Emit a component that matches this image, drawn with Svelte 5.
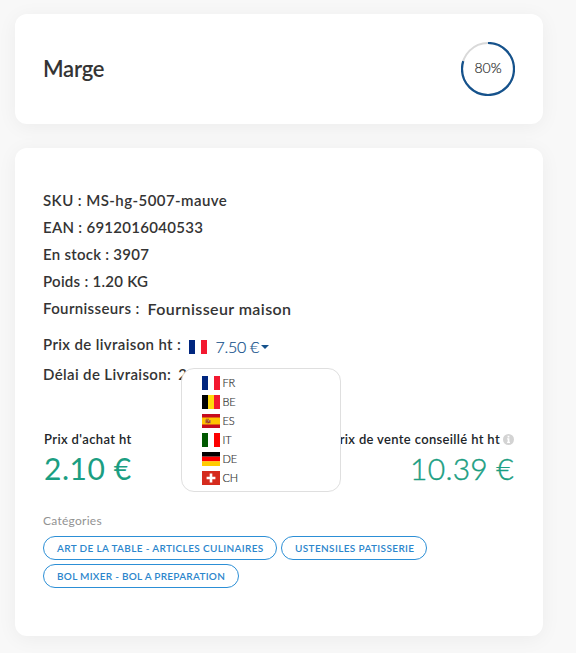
<script>
  const details = [
    { text: 'SKU : MS-hg-5007-mauve', track: 0.43 },
    { text: 'EAN : 6912016040533', track: 0.28 },
    { text: 'En stock : 3907', track: 0.26 },
    { text: 'Poids : 1.20 KG', track: 0.27 }
  ];
  const countries = ['FR', 'BE', 'ES', 'IT', 'DE', 'CH'];
  const categories = [
    { text: 'ART DE LA TABLE - ARTICLES CULINAIRES', width: 234, track: 0.36 },
    { text: 'USTENSILES PATISSERIE', width: 146, track: 0.37 },
    { text: 'BOL MIXER - BOL A PREPARATION', width: 196, track: 0.28 }
  ];
</script>

{#snippet flag(code)}
  <svg class="flag" width="18" height="14" viewBox="0 0 18 14" aria-hidden="true">
    {#if code === 'FR'}
      <path fill="#00267f" d="M0 0h6v14H0z" /><path fill="#fff" d="M6 0h6v14H6z" /><path fill="#f31830" d="M12 0h6v14h-6z" />
    {:else if code === 'BE'}
      <path fill="#000001" d="M0 0h6v14H0z" /><path fill="#ffd90c" d="M6 0h6v14H6z" /><path fill="#f31830" d="M12 0h6v14h-6z" />
    {:else if code === 'ES'}
      <path fill="#c60b1e" d="M0 0h18v14H0z" /><path fill="#ffc400" d="M0 3.5h18v7H0z" />
      <path fill="#c68a35" d="M3 5.4h1v3.8H3zM8 6h1v3.2H8z" />
      <path fill="#ad5a23" d="M4 4.8h3v1H4zM4 6.2h4V9L6 9.6 4 9z" />
      <path fill="#9b302c" d="M4.3 6.4h1.4v1.2H4.3zM6 7.6h1.5V9H6z" />
      <path fill="#9da0aa" d="M6 6.4h1v1H6z" />
    {:else if code === 'IT'}
      <path fill="#005700" d="M0 0h6v14H0z" /><path fill="#fff" d="M6 0h6v14H6z" /><path fill="#fc0000" d="M12 0h6v14h-6z" />
    {:else if code === 'DE'}
      <path fill="#000" d="M0 0h18v4.7H0z" /><path fill="#f00" d="M0 4.7h18v4.7H0z" /><path fill="#fc0" d="M0 9.3h18V14H0z" />
    {:else}
      <path fill="#d52b1e" d="M0 0h18v14H0z" /><path fill="#fff" d="M7.7 2.6h2.6v3.1h3.1v2.6h-3.1v3.1H7.7V8.3H4.6V5.7h3.1z" />
    {/if}
  </svg>
{/snippet}

<main>
  <section class="card margin">
    <h2>Marge</h2>
    <div class="gauge">
      <svg width="54" height="54" viewBox="0 0 54 54" aria-hidden="true">
        <circle cx="27" cy="27" r="26" fill="none" stroke="#d9d9d9" stroke-width="2" />
        <circle cx="27" cy="27" r="26" fill="none" stroke="#15528c" stroke-width="2.2" pathLength="100" stroke-dasharray="80 20" transform="rotate(-90 27 27)" />
      </svg>
      <span>80%</span>
    </div>
  </section>

  <section class="card product">
    {#each details as d}
      <div class="row" style="letter-spacing: {d.track}px">{d.text}</div>
    {/each}
    <div class="row supplier"><span>Fournisseurs :</span><b>Fournisseur maison</b></div>
    <div class="row delivery">
      <span>Prix de livraison ht :</span>
      <div class="picker">
        {@render flag('FR')}
        <span class="fee">7.50 €</span><i class="caret"></i>
        <ul class="menu">
          {#each countries as c}
            <li>{@render flag(c)}<span>{c}</span></li>
          {/each}
        </ul>
      </div>
    </div>
    <div class="row delay"><span>Délai de Livraison:</span><span>2</span></div>

    <div class="prices">
      <div>
        <div class="label">Prix d'achat ht</div>
        <div class="amount">2.10 €</div>
      </div>
      <div class="right">
        <div class="label sale">
          Prix de vente conseillé ht ht
          <svg width="11" height="11" viewBox="0 0 11 11" aria-hidden="true">
            <circle cx="5.5" cy="5.5" r="5.5" fill="#d3d3d3" />
            <path fill="#fff" d="M4.6 1.7h1.8v1.7H4.6zM4.1 4.3h2.3v3.5H7v1.1H4.1V7.8h.6V5.4h-.6z" />
          </svg>
        </div>
        <div class="amount light">10.39 €</div>
      </div>
    </div>

    <div class="caption">Catégories</div>
    <div class="tags">
      {#each categories as c}
        <span class="tag" style="width: {c.width}px; letter-spacing: {c.track}px">{c.text}</span>
      {/each}
    </div>
  </section>
</main>

<style>
  :global(body) { background: #f8f8f8; }
  main {
    box-sizing: border-box;
    height: 653px;
    overflow: hidden;
    padding: 14px 33px 0 15px;
    display: flex;
    flex-direction: column;
    gap: 24px;
    font-family: Lato, 'Noto Sans', sans-serif;
    color: #343434;
  }
  .card {
    box-sizing: border-box;
    background: #fff;
    border-radius: 12px;
    box-shadow: 0 3px 20px rgba(0, 0, 0, 0.05);
    flex: none;
  }
  .margin {
    height: 110px;
    padding: 0 28px;
    display: flex;
    align-items: center;
    justify-content: space-between;
  }
  h2 { margin: -1px 0 0; font-size: 22px; line-height: 28px; font-weight: 600; letter-spacing: -0.2px; }
  .gauge { display: grid; place-items: center; width: 54px; height: 54px; }
  .gauge > * { grid-area: 1 / 1; }
  .gauge span { font-size: 14px; line-height: 18px; font-weight: 300; margin-top: -2px; -webkit-text-stroke: 0.2px; }
  .product { height: 488px; padding: 39px 28px 0; }
  .row {
    display: flex;
    align-items: center;
    height: 27px;
    line-height: 27px;
    font-size: 15px;
    font-weight: 600;
    letter-spacing: 0.36px;
    white-space: nowrap;
  }
  .supplier b { font-size: 16px; font-weight: 600; letter-spacing: 0.4px; margin: 0 0 0 8px; }
  .delivery { margin-top: 9px; }
  .picker { position: relative; display: flex; align-items: center; height: 27px; margin: 4px 0 0 7.3px; }
  .flag { display: block; flex: none; }
  .fee { margin: -1px 2px 0 9px; font-size: 16px; font-weight: 300; letter-spacing: -0.3px; color: #15528c; -webkit-text-stroke: 0.2px; }
  .caret { border: 4px solid transparent; border-top-color: #15528c; border-bottom: 0; }
  .menu {
    position: absolute;
    left: -8px;
    top: 35px;
    z-index: 2;
    box-sizing: border-box;
    width: 160px;
    height: 124px;
    margin: 0;
    padding: 4px 20px;
    list-style: none;
    background: #fff;
    border: 1px solid #dfdfdf;
    border-radius: 13px;
  }
  .menu li { display: flex; align-items: center; height: 19px; gap: 3px; }
  .menu span { font-size: 11px; line-height: 19px; font-weight: 300; letter-spacing: -0.2px; color: #333; -webkit-text-stroke: 0.2px; }
  .delay { margin-top: 3px; }
  .delay span + span { margin-left: 7px; }
  .prices { display: flex; justify-content: space-between; margin-top: 42px; }
  .label { height: 18px; line-height: 18px; font-size: 13px; font-weight: 600; letter-spacing: 0.38px; color: #212529; white-space: nowrap; padding-left: 1px; }
  .sale { display: flex; align-items: center; gap: 3px; letter-spacing: 0.34px; }
  .amount { height: 40px; line-height: 40px; font-size: 30px; letter-spacing: 0.55px; color: #1b9e82; padding-left: 1px; }
  .light { font-weight: 300; letter-spacing: 0.25px; -webkit-text-stroke: 0.4px; }
  .right { text-align: right; margin-right: 1px; }
  .caption { margin-top: 24px; height: 18px; line-height: 18px; font-size: 12px; letter-spacing: 0.26px; color: #929292; font-weight: 400; }
  .tags { display: flex; flex-wrap: wrap; gap: 4px; margin-top: 6px; }
  .tag {
    box-sizing: border-box;
    height: 24px;
    padding-left: 13px;
    border: 1px solid #2c8fd6;
    border-radius: 12px;
    font-size: 10px;
    font-weight: 600;
    line-height: 22px;
    color: #2c86cc;
    white-space: nowrap;
  }
</style>
